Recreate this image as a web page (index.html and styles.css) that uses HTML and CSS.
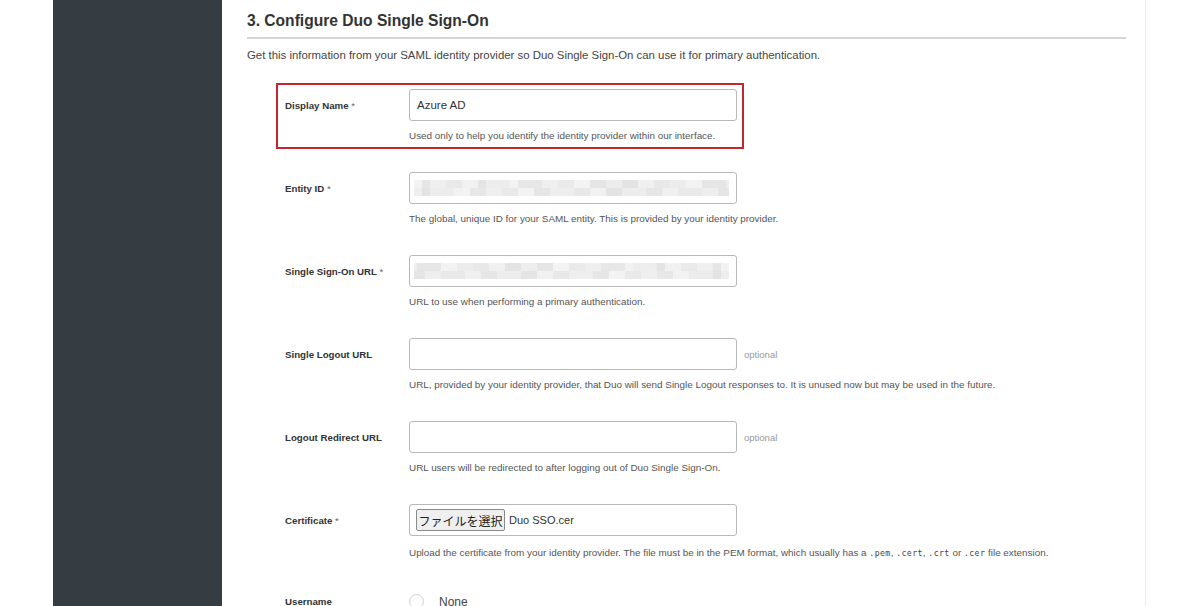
FILE: index.html
```html
<!DOCTYPE html>
<html lang="en">
<head>
<meta charset="utf-8">
<title>Configure Duo Single Sign-On</title>
<link rel="stylesheet" href="styles.css">
</head>
<body>
<div class="page">
  <aside class="sidebar"></aside>
  <main class="main">
    <h2 class="title">3. Configure Duo Single Sign-On</h2>
    <p class="intro">Get this information from your SAML identity provider so Duo Single Sign-On can use it for primary authentication.</p>
    <div class="form">
      <div class="row row-highlight">
        <label class="label">Display Name <span class="req">*</span></label>
        <div class="field"><div class="input">Azure AD</div></div>
        <p class="help">Used only to help you identify the identity provider within our interface.</p>
      </div>
      <div class="row">
        <label class="label">Entity ID <span class="req">*</span></label>
        <div class="field"><div class="input"><div class="pixelated"></div></div></div>
        <p class="help">The global, unique ID for your SAML entity. This is provided by your identity provider.</p>
      </div>
      <div class="row">
        <label class="label">Single Sign-On URL <span class="req">*</span></label>
        <div class="field"><div class="input"><div class="pixelated alt"></div></div></div>
        <p class="help">URL to use when performing a primary authentication.</p>
      </div>
      <div class="row">
        <label class="label">Single Logout URL</label>
        <div class="field"><div class="input"></div><span class="optional">optional</span></div>
        <p class="help">URL, provided by your identity provider, that Duo will send Single Logout responses to. It is unused now but may be used in the future.</p>
      </div>
      <div class="row">
        <label class="label">Logout Redirect URL</label>
        <div class="field"><div class="input"></div><span class="optional">optional</span></div>
        <p class="help">URL users will be redirected to after logging out of Duo Single Sign-On.</p>
      </div>
      <div class="row row-cert">
        <label class="label">Certificate <span class="req">*</span></label>
        <div class="field"><div class="input file-input"><span class="file-btn">ファイルを選択</span><span class="file-name">Duo SSO.cer</span></div></div>
        <p class="help help-cert">Upload the certificate from your identity provider. The file must be in the PEM format, which usually has a <code>.pem</code>, <code>.cert</code>, <code>.crt</code> or <code>.cer</code> file extension.</p>
      </div>
      <div class="row row-radio">
        <label class="label">Username</label>
        <div class="field radio-field"><span class="radio"></span><span class="radio-label">None</span></div>
      </div>
    </div>
  </main>
</div>
</body>
</html>
```

FILE: styles.css
```css
html, body {
  margin: 0;
  padding: 0;
  background: #ffffff;
  height: 606px;
  overflow: hidden;
}
body {
  font-family: "Liberation Sans", Arial, sans-serif;
  color: #333;
}
.page {
  display: flex;
  width: 1093px;
  margin-left: 53px;
  height: 606px;
}
.sidebar {
  width: 169px;
  flex: none;
  background: #363d42;
}
.main {
  flex: 1;
  padding: 11px 19px 0 25px;
  border-right: 1px solid #ececec;
}
.title {
  margin: 0;
  font-size: 15.6px;
  line-height: 20px;
  font-weight: bold;
  color: #333;
  padding-bottom: 6px;
  border-bottom: 2px solid #d6d6d6;
}
.intro {
  margin: 8px 0 0;
  font-size: 11.4px;
  line-height: 16px;
  color: #444;
}
.form {
  margin: 20px 0 0 29px;
}
.row {
  display: grid;
  grid-template-columns: 124px auto;
  grid-template-rows: 32px auto;
  row-gap: 8px;
  width: 450px;
  padding: 4px 7px 4px 7px;
  border: 2px solid transparent;
  margin-bottom: 17px;
}
.row-highlight {
  border-color: #c1272d;
}
.label {
  align-self: center;
  font-size: 9.7px;
  font-weight: bold;
  color: #333;
  white-space: nowrap;
}
.req {
  font-weight: normal;
  color: #666;
}
.field {
  display: flex;
  align-items: center;
  gap: 7px;
}
.input {
  flex: none;
  box-sizing: border-box;
  width: 328px;
  height: 32px;
  border: 1px solid #b9b9b9;
  border-radius: 3px;
  display: flex;
  align-items: center;
  padding: 0 7px;
  font-size: 11.5px;
  color: #333;
}
.optional {
  font-size: 9.5px;
  color: #999;
  white-space: nowrap;
}
.help {
  grid-column: 2;
  margin: 0;
  font-size: 9.9px;
  line-height: 14px;
  color: #555;
  white-space: nowrap;
}
.help-cert {
  margin-top: 2px;
}
.help code {
  font-family: "DejaVu Sans Mono", monospace;
  font-size: 8.2px;
  letter-spacing: 0.4px;
  color: #444;
}
.pixelated {
  margin-left: -3px;
  width: 320px;
  height: 16px;
  background:
    linear-gradient(90deg, #f3f3f3 0 8px, #e6e6e6 8px 16px, #efefef 16px 32px, #e9e9e9 32px 48px, #f1f1f1 48px 64px, #e4e4e4 64px 72px, #ededed 72px 96px, #f2f2f2 96px 104px, #e7e7e7 104px 128px, #efefef 128px 144px, #eaeaea 144px 160px, #f3f3f3 160px 176px, #e5e5e5 176px 192px, #ededed 192px 208px, #e3e3e3 208px 224px, #f0f0f0 224px 240px, #e8e8e8 240px 256px, #ececec 256px 272px, #f2f2f2 272px 288px, #e6e6e6 288px 312px, #eeeeee 312px 320px) 0 0 / 100% 8px no-repeat,
    linear-gradient(90deg, #eeeeee 0 8px, #e3e3e3 8px 16px, #ececec 16px 40px, #f2f2f2 40px 56px, #e7e7e7 56px 72px, #efefef 72px 88px, #e9e9e9 88px 104px, #f3f3f3 104px 120px, #e6e6e6 120px 136px, #eeeeee 136px 160px, #e8e8e8 160px 176px, #f1f1f1 176px 192px, #e4e4e4 192px 208px, #ededed 208px 232px, #e6e6e6 232px 248px, #f0f0f0 248px 264px, #e9e9e9 264px 288px, #eeeeee 288px 304px, #e5e5e5 304px 320px) 0 8px / 100% 8px no-repeat;
}
.pixelated.alt {
  transform: scaleX(-1);
}
.file-input {
  padding: 0 6px;
}
.file-btn {
  display: inline-flex;
  align-items: center;
  justify-content: center;
  width: 89px;
  height: 22px;
  box-sizing: border-box;
  background: #efefef;
  border: 1px solid #8a8a8a;
  border-radius: 2px;
  font-family: "Noto Sans CJK JP", sans-serif;
  font-size: 12px;
  color: #222;
}
.file-name {
  margin-left: 4px;
  font-size: 11px;
  color: #333;
}
.row-radio {
  grid-template-rows: 25px;
}
.radio-field {
  gap: 15px;
}
.radio {
  width: 13px;
  height: 13px;
  border: 1px solid #d0d0d0;
  border-radius: 50%;
  background: #fff;
}
.radio-label {
  font-size: 12px;
  color: #444;
}
```
